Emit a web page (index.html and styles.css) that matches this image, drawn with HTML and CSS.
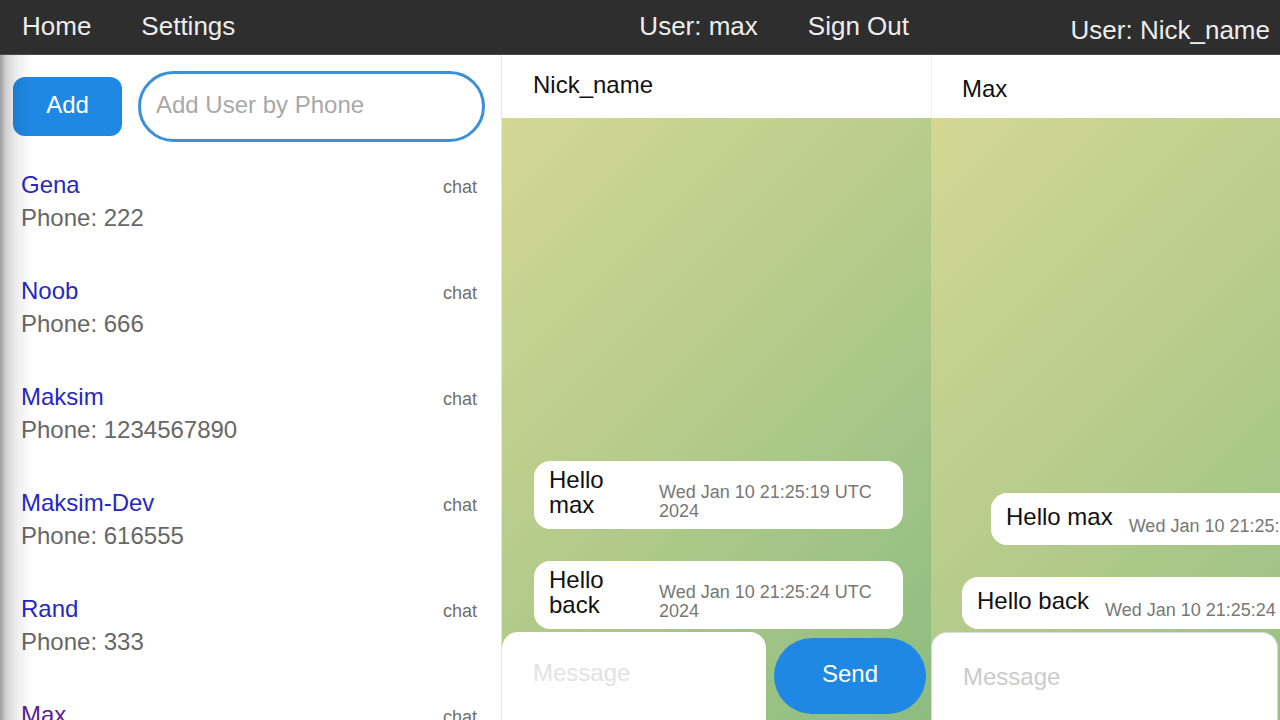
FILE: index.html
```html
<!DOCTYPE html>
<html lang="en">
<head>
<meta charset="utf-8">
<title>Chat</title>
<link rel="stylesheet" href="styles.css">
</head>
<body>
<div class="desktop">
  <div class="win win-main">
    <header class="topbar">
      <nav class="nav"><span>Home</span><span>Settings</span></nav>
      <nav class="nav"><span>User: max</span><span>Sign Out</span></nav>
    </header>
    <div class="win-body">
      <aside class="sidebar">
        <div class="add-row">
          <button class="btn-add">Add</button>
          <input class="phone-input" type="text" placeholder="Add User by Phone">
        </div>
        <ul class="contacts">
          <li class="contact">
            <div class="contact-top"><a class="contact-name">Gena</a><span class="chat-link">chat</span></div>
            <div class="contact-phone">Phone: 222</div>
          </li>
          <li class="contact">
            <div class="contact-top"><a class="contact-name">Noob</a><span class="chat-link">chat</span></div>
            <div class="contact-phone">Phone: 666</div>
          </li>
          <li class="contact">
            <div class="contact-top"><a class="contact-name">Maksim</a><span class="chat-link">chat</span></div>
            <div class="contact-phone">Phone: 1234567890</div>
          </li>
          <li class="contact">
            <div class="contact-top"><a class="contact-name">Maksim-Dev</a><span class="chat-link">chat</span></div>
            <div class="contact-phone">Phone: 616555</div>
          </li>
          <li class="contact">
            <div class="contact-top"><a class="contact-name">Rand</a><span class="chat-link">chat</span></div>
            <div class="contact-phone">Phone: 333</div>
          </li>
          <li class="contact">
            <div class="contact-top"><a class="contact-name visited">Max</a><span class="chat-link">chat</span></div>
            <div class="contact-phone">Phone: 111</div>
          </li>
        </ul>
      </aside>
      <section class="chat chat-main">
        <div class="chat-head">Nick_name</div>
        <div class="chat-body">
          <div class="messages">
            <div class="bubble">
              <div class="bubble-text">Hello max</div>
              <div class="bubble-time">Wed Jan 10 21:25:19 UTC 2024</div>
            </div>
            <div class="bubble">
              <div class="bubble-text">Hello back</div>
              <div class="bubble-time">Wed Jan 10 21:25:24 UTC 2024</div>
            </div>
          </div>
          <div class="composer">
            <input class="msg-input" type="text" placeholder="Message">
            <button class="btn-send">Send</button>
          </div>
        </div>
      </section>
    </div>
  </div>
  <div class="win win-side">
    <header class="topbar">
      <nav class="nav"><span>User: Nick_name</span></nav>
    </header>
    <section class="chat chat-side">
      <div class="chat-head">Max</div>
      <div class="chat-body">
        <div class="messages">
          <div class="bubble bubble-indent">
            <div class="bubble-text">Hello max</div>
            <div class="bubble-time">Wed Jan 10 21:25:19 UTC 2024</div>
          </div>
          <div class="bubble bubble-flush">
            <div class="bubble-text">Hello back</div>
            <div class="bubble-time">Wed Jan 10 21:25:24 UTC 2024</div>
          </div>
        </div>
        <div class="composer">
          <input class="msg-input" type="text" placeholder="Message">
          <button class="btn-send">Send</button>
        </div>
      </div>
    </section>
  </div>
</div>
</body>
</html>
```
FILE: styles.css
```css
* { box-sizing: border-box; }

html, body {
  margin: 0;
  width: 1280px;
  height: 720px;
  overflow: hidden;
}

body {
  font-family: "Liberation Sans", Arial, sans-serif;
  background: #2e2e2e;
}

.desktop {
  display: flex;
  width: 1280px;
  height: 720px;
}

.win {
  display: flex;
  flex-direction: column;
  height: 720px;
  overflow: hidden;
  flex: none;
}

.win-main { width: 931px; }
.win-side { width: 349px; }

.topbar {
  height: 55px;
  flex: none;
  background: #2e2e2e;
  border-bottom: 1px solid #4a4a4a;
  display: flex;
  align-items: center;
  justify-content: space-between;
  padding: 0 22px 2px;
  color: #ededed;
  font-size: 26px;
}

.win-side .topbar {
  justify-content: flex-end;
  padding: 7px 10px 0 0;
}

.nav {
  display: flex;
  gap: 50px;
}

.win-body {
  flex: 1;
  display: flex;
  min-height: 0;
}

/* Sidebar */
.sidebar {
  width: 502px;
  flex: none;
  background: #fff;
  border-right: 1px solid #e4e4e4;
  position: relative;
  overflow: hidden;
}

.sidebar::before {
  content: "";
  position: absolute;
  left: 0;
  top: 0;
  bottom: 0;
  width: 34px;
  background: linear-gradient(to right, rgba(0,0,0,0.38) 0, rgba(0,0,0,0.18) 6px, rgba(0,0,0,0.06) 18px, rgba(0,0,0,0) 34px);
  pointer-events: none;
}

.add-row {
  display: flex;
  align-items: center;
  gap: 16px;
  padding: 16px 16px 16px 13px;
}

.btn-add {
  width: 109px;
  height: 59px;
  flex: none;
  border: none;
  border-radius: 12px;
  background: #1f88e4;
  color: #fff;
  font: 24px "Liberation Sans", Arial, sans-serif;
  padding: 0 0 3px;
}

.phone-input {
  width: 347px;
  height: 71px;
  flex: none;
  border: 3px solid #3b8fdb;
  border-radius: 36px;
  padding: 0 15px 3px;
  font: 24px "Liberation Sans", Arial, sans-serif;
  color: #333;
  outline: none;
  background: #fff;
}

.phone-input::placeholder { color: #a8a8a8; }

.contacts {
  list-style: none;
  margin: 0;
  padding: 10px 24px 0 21px;
  display: flex;
  flex-direction: column;
  gap: 40px;
}

.contact-top {
  display: flex;
  justify-content: space-between;
  align-items: baseline;
  height: 33px;
  line-height: 33px;
}

.contact-name {
  color: #2727c2;
  font-size: 24px;
  text-decoration: none;
}

.contact-name.visited { color: #5b2196; }

.chat-link {
  color: #6f6f6f;
  font-size: 18px;
  line-height: 20px;
}

.contact-phone {
  color: #676767;
  font-size: 24px;
  line-height: 33px;
}

/* Chat panels */
.chat {
  display: flex;
  flex-direction: column;
  min-width: 0;
  min-height: 0;
}

.chat-main { flex: 1; }

.chat-side {
  width: 512px;
  flex: 1;
}

.chat-head {
  height: 63px;
  flex: none;
  background: #fff;
  display: flex;
  align-items: center;
  padding: 0 0 4px 31px;
  font-size: 24px;
  color: #111;
}

.chat-side .chat-head {
  padding: 4px 0 0 31px;
  box-shadow: inset 1px 0 0 #efefef;
}

.chat-body {
  flex: 1;
  display: flex;
  flex-direction: column;
  min-height: 0;
  background: linear-gradient(135deg, #d4d793 0%, #b6cc8b 45%, #8cbc81 100%);
}

.messages {
  flex: 1;
  display: flex;
  flex-direction: column;
  justify-content: flex-end;
  align-items: flex-start;
  gap: 32px;
  padding: 0 28px 3px 32px;
}

.chat-side .messages { padding: 0 0 3px 0; }

.bubble {
  display: flex;
  align-items: center;
  background: #fff;
  border-radius: 16px;
  padding: 6px 15px;
  min-height: 52px;
}

.chat-main .bubble { width: 369px; }

.chat-side .bubble {
  white-space: nowrap;
  flex: none;
}

.bubble-indent { margin-left: 60px; }
.bubble-flush { margin-left: 31px; }

.bubble-text {
  font-size: 24px;
  line-height: 25px;
  color: #111;
  padding-bottom: 6px;
  flex: none;
}

.chat-main .bubble-text {
  width: 90px;
  margin-right: 20px;
}

.chat-side .bubble-text { margin-right: 16px; }

.bubble-time {
  font-size: 18px;
  line-height: 19px;
  color: #777;
  padding-top: 14px;
}

.composer {
  height: 88px;
  flex: none;
  display: flex;
  align-items: center;
  gap: 8px;
  padding-right: 5px;
}

.msg-input {
  flex: 1;
  min-width: 0;
  align-self: stretch;
  border: none;
  border-radius: 16px 16px 0 0;
  background: #fff;
  padding: 0 0 6px 31px;
  font: 24px "Liberation Sans", Arial, sans-serif;
  color: #333;
  outline: none;
}

.msg-input::placeholder { color: #e2e2e2; }

.chat-side .msg-input {
  padding: 0 0 0 31px;
  border: 1px solid #d9d9d9;
  border-bottom: none;
}

.chat-side .msg-input::placeholder { color: #cbcbcb; }

.btn-send {
  width: 152px;
  height: 76px;
  flex: none;
  border: none;
  border-radius: 38px;
  background: #1f88e4;
  color: #fff;
  font: 24px "Liberation Sans", Arial, sans-serif;
  padding: 0 0 5px;
}
```
